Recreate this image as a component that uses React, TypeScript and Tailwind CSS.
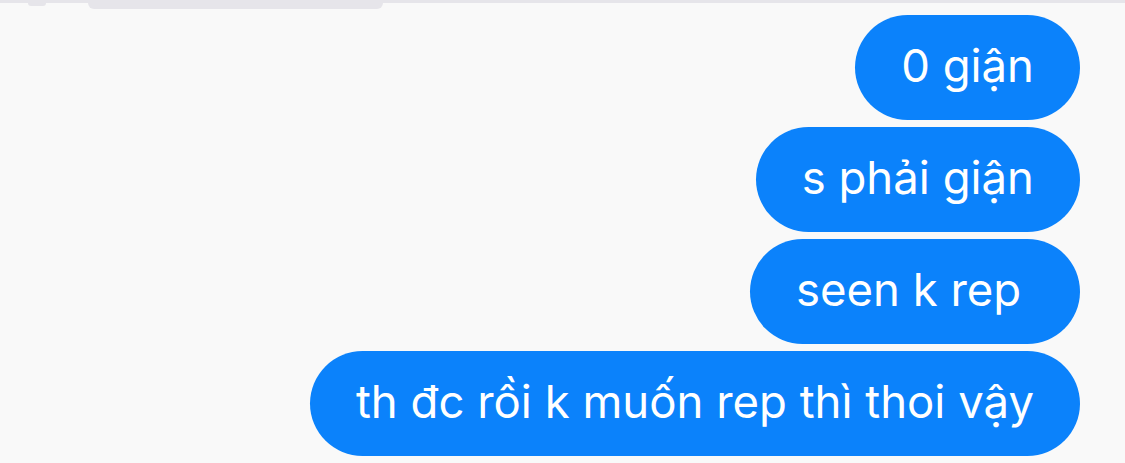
import React from "react";

const messages = ["0 giận", "s phải giận", "seen k rep\u00a0", "th đc rồi k muốn rep thì thoi vậy"];

export default function App() {
  return (
    <div className="w-[1125px] h-[463px] overflow-hidden bg-[#f9f9f9] border-t-[3px] border-[#e6e5ea]" style={{ fontFamily: "Inter, 'Noto Sans', sans-serif" }}>
      <div className="h-[12px] flex items-start">
        <div className="ml-[28px] mt-0 w-[18px] h-[3px] rounded-b-full bg-[#e6e5ea]" />
        <div className="ml-[42px] w-[295px] h-[6px] rounded-b-[40px] bg-[#e6e5ea]" />
      </div>
      <div className="flex flex-col items-end gap-[7px] pr-[45px]">
        {messages.map((m) => (
          <div
            key={m}
            className="h-[105px] rounded-full bg-[#0b82fb] px-[46px] flex items-center text-white text-[45.5px] leading-none whitespace-pre"
          >
            <span className="-mt-[4px]">{m}</span>
          </div>
        ))}
      </div>
    </div>
  );
}
